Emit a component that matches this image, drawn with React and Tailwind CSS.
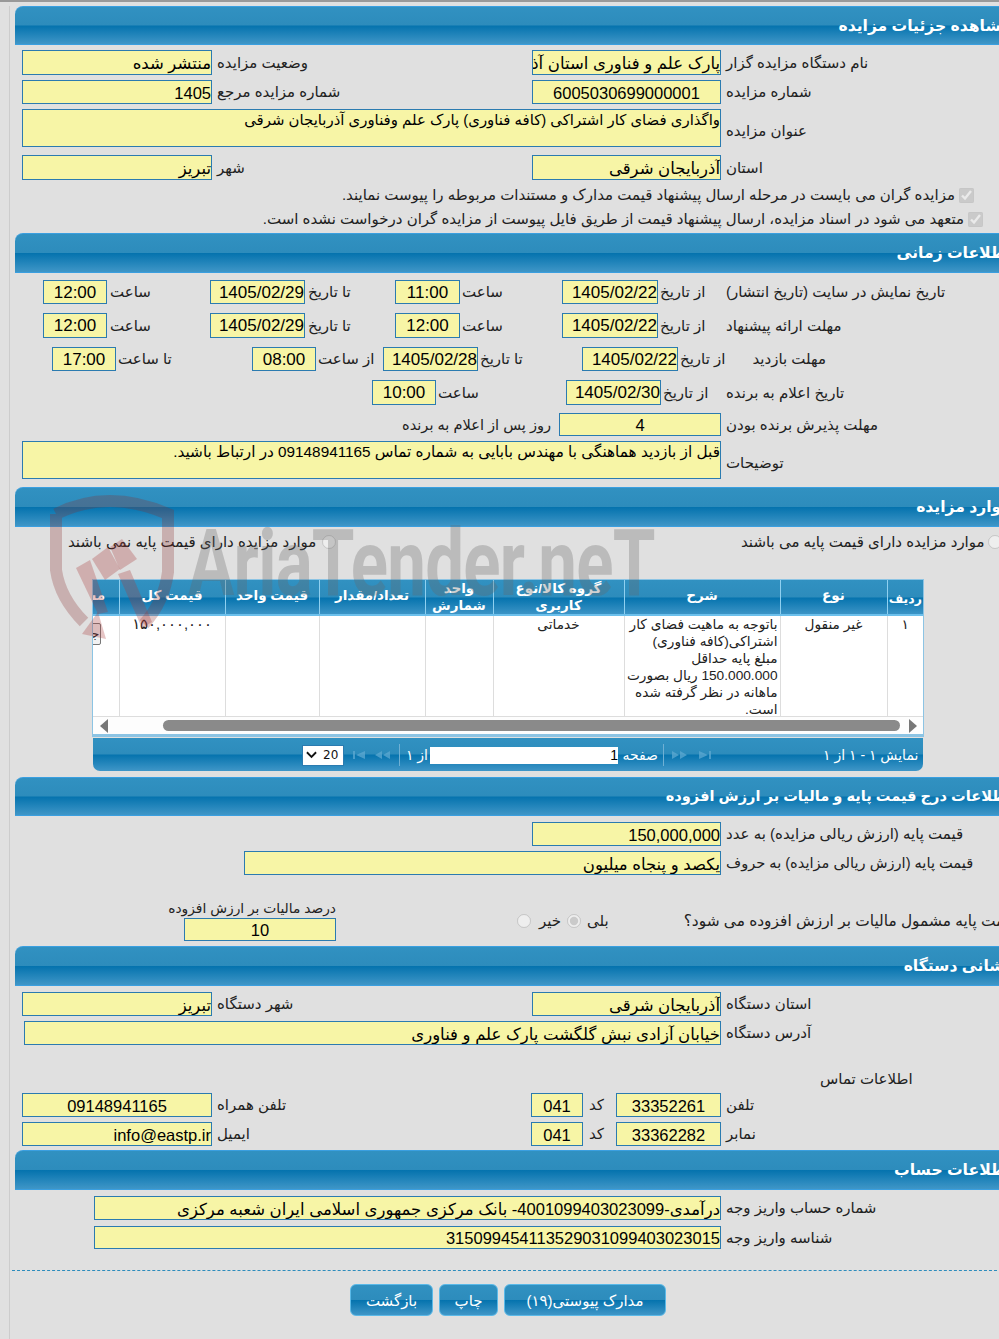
const BAR = "bg-[linear-gradient(to_bottom,#3191c1_0%,#2d8cbc_49%,#0573ae_51%,#3f96c7_100%)]";
const CLOCK = "text-[17px] leading-[24px]";

function Header({ children, className = "", size = "text-[15.6px]" }) {
  return (
    <div
      dir="rtl"
      className={`ml-[5px] w-[1000px] rounded-tl-[8px] border-t border-b border-[#3a9fe0] pr-[4px] flex items-center font-bold text-white whitespace-nowrap ${size} ${BAR} ${className}`}
    >
      <span>{children}</span>
    </div>
  );
}

function Row({ children, className = "" }) {
  return <div className={`ml-[12px] flex items-center ${className}`}>{children}</div>;
}

function Label({ children, className = "", size = "text-[15px]" }) {
  return (
    <div dir="rtl" className={`shrink-0 text-left leading-[18px] text-[#222] whitespace-nowrap ${size} ${className}`}>
      {children}
    </div>
  );
}

function Field({ children, className = "", center = false, size = "text-[16.5px] leading-[24px]" }) {
  return (
    <div
      dir="rtl"
      className={`shrink-0 h-full overflow-hidden whitespace-nowrap border border-[#2b7bb0] bg-[#f7f5a6] text-black ${size} ${center ? "text-center" : "text-right"} ${className}`}
    >
      {children}
    </div>
  );
}

function Radio({ checked = false, className = "" }) {
  return <input type="radio" disabled checked={checked} readOnly className={`shrink-0 w-[14px] h-[14px] ${className}`} />;
}

function Triangle({ left = false, className = "" }) {
  return (
    <svg viewBox="0 0 8 14" className={`shrink-0 w-[8px] h-[14px] ${className}`}>
      <path d={left ? "M8 0 L0 7 L8 14 Z" : "M0 0 L8 7 L0 14 Z"} fill="#777" />
    </svg>
  );
}

function PagerIcon({ kind, className = "" }) {
  const paths = {
    first: "M0 1 H2 V9 H0 Z M12 1 V9 L3 5 Z",
    prev: "M7 1 V9 L0 5 Z M15 1 V9 L8 5 Z",
    next: "M0 1 V9 L7 5 Z M8 1 V9 L15 5 Z",
    last: "M0 1 V9 L9 5 Z M10 1 H12 V9 H10 Z",
  };
  const box = kind === "first" || kind === "last" ? "0 0 12 10" : "0 0 15 10";
  return (
    <svg viewBox={box} className={`shrink-0 h-[10px] ${className}`}>
      <path d={paths[kind]} fill="#5fa9d1" fillOpacity="0.75" />
    </svg>
  );
}

function Watermark() {
  return (
    <div className="absolute left-[40px] top-[488px] w-[620px] h-[170px] pointer-events-none z-10">
      <svg viewBox="0 0 160 160" className="absolute left-0 top-0 w-[160px] h-[160px]">
        <path
          d="M16 24 Q68 -2 128 24 L128 82 Q124 112 104 134 M16 24 L16 80 Q20 108 44 132"
          fill="none"
          stroke="#8a2c2c"
          strokeOpacity="0.27"
          strokeWidth="12"
        />
        <path d="M36 78 L50 70 L68 122 L58 124 Z" fill="#a83a3a" fillOpacity="0.3" />
        <path d="M42 144 L58 122 L66 149 Z" fill="#a83a3a" fillOpacity="0.3" />
        <path d="M52 69 L68 57 L80 79 L65 90 Z" fill="#a83a3a" fillOpacity="0.3" />
        <path d="M70 57 L82 49 L97 69 L80 80 Z" fill="#a83a3a" fillOpacity="0.3" />
        <path d="M78 84 L90 80 L112 132 L102 138 Z" fill="#a83a3a" fillOpacity="0.3" />
      </svg>
      <span className="absolute left-[148px] top-[14px] text-[92px] leading-[120px] font-bold tracking-[-1px] text-[#666]/30 whitespace-nowrap origin-left scale-x-[0.75] [font-family:'Roboto',sans-serif]">
        AriaTender.neT
      </span>
    </div>
  );
}

const cols = [
  ["ردیف", "w-[36px] pt-[4px] text-[12.5px]"],
  ["نوع", "w-[107px] pb-[3px] text-[13.5px]"],
  ["شرح", "w-[156px] pb-[3px] text-[13.5px]"],
  ["گروه کالا/نوع کاربری", "w-[131px] text-[13.5px]"],
  ["واحد شمارش", "w-[68px] text-[13.5px]"],
  ["تعداد/مقدار", "w-[106px] pb-[3px] text-[13.5px]"],
  ["قیمت واحد", "w-[94px] pb-[3px] text-[13.5px]"],
  ["قیمت کل", "w-[106px] pb-[3px] text-[13.5px]"],
  ["مشاهده", "w-[80px] pb-[3px] text-[13.5px]"],
];

function ItemsTable() {
  return (
    <div className="ml-[82px] w-[832px] h-[158px] border border-[#8cc4e4] border-b-[3px] bg-white flex flex-col overflow-hidden">
      <div dir="rtl" className="h-[136px] overflow-hidden">
        <table className="table-fixed w-[884px] border-collapse text-[13.7px] text-[#222]">
          <thead>
            <tr className={`h-[35px] ${BAR}`}>
              {cols.map(([title, w]) => (
                <th key={title} className={`${w} border-l border-[#8fd0f0] border-b-2 border-b-[#6cc0ec] text-center leading-[17px] font-bold text-white`}>
                  {title}
                </th>
              ))}
            </tr>
          </thead>
          <tbody>
            <tr className="h-[103px] align-top leading-[17px]">
              <td className="border-l border-[#ddd] text-center">۱</td>
              <td className="border-l border-[#ddd] text-center">غیر منقول</td>
              <td className="border-l border-[#ddd] pr-[2px] pl-[2px] text-right">
                باتوجه به ماهیت فضای کار اشتراکی(کافه فناوری)
                <br />
                مبلغ پایه حداقل 150.000.000 ریال بصورت ماهانه در نظر گرفته شده است.
              </td>
              <td className="border-l border-[#ddd] text-center">خدماتی</td>
              <td className="border-l border-[#ddd]"></td>
              <td className="border-l border-[#ddd]"></td>
              <td className="border-l border-[#ddd]"></td>
              <td className="border-l border-[#ddd] text-center text-[14.8px]">۱۵۰,۰۰۰,۰۰۰</td>
              <td className="pt-[7px]">
                <div className="mr-[18px] w-[44px] h-[22px] border border-[#777] rounded-[2px] bg-[#f2f2f2] text-right leading-[20px] overflow-hidden">
                  جزئیات
                </div>
              </td>
            </tr>
          </tbody>
        </table>
      </div>
      <div className="flex-1 border-t border-[#ddd] flex items-center bg-[#fdfdfd]">
        <Triangle left className="ml-[7px]" />
        <div className="ml-[55px] w-[737px] h-[11px] rounded-full bg-[#8a8a8a]" />
        <Triangle className="ml-[9px]" />
      </div>
    </div>
  );
}

function Pager() {
  return (
    <div className={`ml-[83px] mt-[1px] w-[830px] h-[33px] pt-[1px] rounded-b-[7px] flex items-center text-white text-[14px] ${BAR}`}>
      <div className="ml-[209px] w-[42px] h-[21px] bg-white flex items-center border border-[#2b7bb0] text-[#111] text-[12px]">
        <svg viewBox="0 0 12 8" className="ml-[3px] w-[11px] h-[8px]">
          <path d="M1 1 L6 6 L11 1" fill="none" stroke="#111" strokeWidth="2" />
        </svg>
        <span className="ml-[6px] [font-family:'DejaVu_Sans',sans-serif]">20</span>
      </div>
      <PagerIcon kind="first" className="ml-[9px] w-[12px]" />
      <PagerIcon kind="prev" className="ml-[10px] w-[15px]" />
      <div className="ml-[9px] w-px h-[22px] bg-[#6fb0d4]" />
      <span dir="rtl" className="ml-[5px] w-[23px] whitespace-nowrap">از ۱</span>
      <div dir="rtl" className="ml-[2px] w-[188px] h-[17px] bg-white text-black text-right leading-[17px]">1</div>
      <span dir="rtl" className="ml-[5px] w-[35px]">صفحه</span>
      <div className="ml-[5px] w-px h-[22px] bg-[#6fb0d4]" />
      <PagerIcon kind="next" className="ml-[8px] w-[15px]" />
      <PagerIcon kind="last" className="ml-[12px] w-[12px]" />
      <span dir="rtl" className="ml-[112px] whitespace-nowrap">نمایش ۱ - ۱ از ۱</span>
    </div>
  );
}

function ActionButton({ children, className = "" }) {
  return (
    <button className={`h-[32px] pt-[2px] rounded-[6px] border border-[#5ab9e8] text-[15px] text-white ${BAR} ${className}`}>
      {children}
    </button>
  );
}

export default function App() {
  return (
    <div className="relative w-[999px] h-[1339px] overflow-hidden bg-[#e0e0e0] border-t-2 border-[#999] [font-family:'Liberation_Sans','DejaVu_Sans',sans-serif]">
      <Watermark />
      <div className="ml-[9px] h-full border-l border-[#ccc]">
        <Header className="mt-[4px] h-[39px]">مشاهده جزئیات مزایده</Header>

        <Row className="mt-[5px] h-[25px]">
          <Field className="w-[190px]">منتشر شده</Field>
          <Label className="ml-[5px] w-[315px]">وضعیت مزایده</Label>
          <Field className="w-[189px]">پارک علم و فناوری استان آذربایجان شرقی</Field>
          <Label className="ml-[5px] w-[200px]">نام دستگاه مزایده گزار</Label>
        </Row>
        <Row className="mt-[5px] h-[24px]">
          <Field className="w-[190px]">1405</Field>
          <Label className="ml-[5px] w-[315px]">شماره مزایده مرجع</Label>
          <Field center className="w-[189px]">6005030699000001</Field>
          <Label className="ml-[5px] w-[200px]">شماره مزایده</Label>
        </Row>
        <Row className="mt-[5px] h-[38px]">
          <Field className="w-[699px] pt-[1px]" size="text-[14.9px] leading-[18px]">واگذاری فضای کار اشتراکی (کافه فناوری) پارک علم وفناوری آذربایجان شرقی</Field>
          <Label className="ml-[5px] w-[200px] mt-[5px]">عنوان مزایده</Label>
        </Row>
        <Row className="mt-[8px] h-[25px]">
          <Field className="w-[190px]">تبریز</Field>
          <Label className="ml-[5px] w-[315px]">شهر</Label>
          <Field className="w-[189px]">آذربایجان شرقی</Field>
          <Label className="ml-[5px] w-[200px]">استان</Label>
        </Row>
        <Row className="mt-[6px] h-[18px] w-[952px] justify-end">
          <Label>مزایده گران می بایست در مرحله ارسال پیشنهاد قیمت مدارک و مستندات مربوطه را پیوست نمایند.</Label>
          <input type="checkbox" disabled checked readOnly className="ml-[4px] w-[15px] h-[15px]" />
        </Row>
        <Row className="mt-[6px] h-[18px] w-[961px] justify-end">
          <Label>متعهد می شود در اسناد مزایده، ارسال پیشنهاد قیمت از طریق فایل پیوست از مزایده گران درخواست نشده است.</Label>
          <input type="checkbox" disabled checked readOnly className="ml-[4px] w-[15px] h-[15px]" />
        </Row>

        <Header className="mt-[5px] h-[40px]">اطلاعات زمانی</Header>

        <Row className="mt-[7px] h-[24px]">
          <Field center className="ml-[21px] w-[64px]" size={CLOCK}>12:00</Field>
          <Label className="ml-[3px] w-[100px]">ساعت</Label>
          <Field className="w-[95px]" size={CLOCK}>1405/02/29</Field>
          <Label className="ml-[3px] w-[87px]">تا تاریخ</Label>
          <Field center className="w-[65px]" size={CLOCK}>11:00</Field>
          <Label className="ml-[2px] w-[100px]">ساعت</Label>
          <Field className="w-[96px]" size={CLOCK}>1405/02/22</Field>
          <Label className="ml-[2px] w-[66px]">از تاریخ</Label>
          <Label className="w-[240px]">تاریخ نمایش در سایت (تاریخ انتشار)</Label>
        </Row>
        <Row className="mt-[9px] h-[25px]">
          <Field center className="ml-[21px] w-[64px]" size={CLOCK}>12:00</Field>
          <Label className="ml-[3px] w-[100px]">ساعت</Label>
          <Field className="w-[95px]" size={CLOCK}>1405/02/29</Field>
          <Label className="ml-[3px] w-[87px]">تا تاریخ</Label>
          <Field center className="w-[65px]" size={CLOCK}>12:00</Field>
          <Label className="ml-[2px] w-[100px]">ساعت</Label>
          <Field className="w-[96px]" size={CLOCK}>1405/02/22</Field>
          <Label className="ml-[2px] w-[66px]">از تاریخ</Label>
          <Label className="w-[240px]">مهلت ارائه پیشنهاد</Label>
        </Row>
        <Row className="mt-[9px] h-[24px]">
          <Field center className="ml-[30px] w-[64px]" size={CLOCK}>17:00</Field>
          <Label className="ml-[2px] w-[134px]">تا ساعت</Label>
          <Field center className="w-[64px]" size={CLOCK}>08:00</Field>
          <Label className="ml-[2px] w-[65px]">از ساعت</Label>
          <Field className="w-[95px]" size={CLOCK}>1405/02/28</Field>
          <Label className="ml-[2px] w-[102px]">تا تاریخ</Label>
          <Field className="w-[96px]" size={CLOCK}>1405/02/22</Field>
          <Label className="ml-[2px] w-[46px]">از تاریخ</Label>
          <Label className="w-[100px] pl-[31px]">مهلت بازدید</Label>
        </Row>
        <Row className="mt-[9px] h-[25px]">
          <Field center className="ml-[350px] w-[64px]" size={CLOCK}>10:00</Field>
          <Label className="ml-[2px] w-[128px]">ساعت</Label>
          <Field className="w-[95px]" size={CLOCK}>1405/02/30</Field>
          <Label className="ml-[2px] w-[63px]">از تاریخ</Label>
          <Label className="w-[200px]">تاریخ اعلام به برنده</Label>
        </Row>
        <Row className="mt-[8px] h-[23px]">
          <Label className="ml-[380px] w-[157px]" size="text-[14.6px]">روز پس از اعلام به برنده</Label>
          <Field center className="w-[162px]" size="text-[16.5px] leading-[22px]">4</Field>
          <Label className="ml-[5px] w-[200px]">مهلت پذیرش برنده بودن</Label>
        </Row>
        <Row className="mt-[5px] h-[38px]">
          <Field className="w-[699px] pt-[1px]" size="text-[15.3px] leading-[18px]">قبل از بازدید هماهنگی با مهندس بابایی به شماره تماس 09148941165 در ارتباط باشید.</Field>
          <Label className="ml-[5px] w-[200px] mt-[5px]">توضیحات</Label>
        </Row>

        <Header className="mt-[8px] h-[40px]">موارد مزایده</Header>

        <Row className="mt-[5px] h-[20px]">
          <Label className="ml-[46px] w-[250px]">موارد مزایده دارای قیمت پایه نمی باشند</Label>
          <Radio className="ml-[4px]" />
          <Label className="ml-[405px] w-[245px]">موارد مزایده دارای قیمت پایه می باشند</Label>
          <Radio className="ml-[2px]" />
        </Row>

        <div className="mt-[27px]">
          <ItemsTable />
          <Pager />
        </div>

        <Header className="mt-[6px] h-[39px]" size="text-[14.6px]">اطلاعات درج قیمت پایه و مالیات بر ارزش افزوده</Header>

        <Row className="mt-[6px] h-[24px]">
          <Field className="ml-[510px] w-[189px]">150,000,000</Field>
          <Label className="ml-[5px] w-[260px]">قیمت پایه (ارزش ریالی مزایده) به عدد</Label>
        </Row>
        <Row className="mt-[5px] h-[24px]">
          <Field className="ml-[222px] w-[477px]">یکصد و پنجاه میلیون</Field>
          <Label className="ml-[5px] w-[260px]" size="text-[14.6px]">قیمت پایه (ارزش ریالی مزایده) به حروف</Label>
        </Row>
        <Row className="mt-[25px] h-[42px] items-end">
          <div className="ml-[146px] w-[168px] h-full flex flex-col shrink-0">
            <Label className="text-right" size="text-[13.8px]">درصد مالیات بر ارزش افزوده</Label>
            <Field center className="ml-[16px] w-[152px] !h-[23px]" size="text-[16.5px] leading-[22px]">10</Field>
          </div>
          <Radio className="ml-[181px] mb-[14px]" />
          <Label className="ml-[8px] w-[26px] mb-[12px]">خیر</Label>
          <Radio checked className="ml-[2px] mb-[14px]" />
          <Label className="ml-[6px] w-[100px] mb-[12px]">بلی</Label>
          <Label className="w-[330px] mb-[12px]" size="text-[15.4px]">قیمت پایه مشمول مالیات بر ارزش افزوده می شود؟</Label>
        </Row>

        <Header className="mt-[4px] h-[40px]">نشانی دستگاه</Header>

        <Row className="mt-[6px] h-[24px]">
          <Field className="w-[190px]">تبریز</Field>
          <Label className="ml-[5px] w-[315px]">شهر دستگاه</Label>
          <Field className="w-[189px]">آذربایجان شرقی</Field>
          <Label className="ml-[5px] w-[200px]">استان دستگاه</Label>
        </Row>
        <Row className="mt-[5px] h-[24px]">
          <Field className="ml-[2px] w-[697px]">خیابان آزادی نبش گلگشت پارک علم و فناوری</Field>
          <Label className="ml-[5px] w-[200px]">آدرس دستگاه</Label>
        </Row>
        <Row className="mt-[25px] h-[18px]">
          <Label className="ml-[798px] w-[100px]">اطلاعات تماس</Label>
        </Row>
        <Row className="mt-[5px] h-[24px]">
          <Field center className="w-[190px]">09148941165</Field>
          <Label className="ml-[5px] w-[314px]">تلفن همراه</Label>
          <Field center className="w-[52px]">041</Field>
          <Label className="ml-[6px] w-[27px]">کد</Label>
          <Field center className="w-[105px]">33352261</Field>
          <Label className="ml-[5px] w-[100px]">تلفن</Label>
        </Row>
        <Row className="mt-[5px] h-[24px]">
          <Field className="w-[190px]">info@eastp.ir</Field>
          <Label className="ml-[5px] w-[314px]">ایمیل</Label>
          <Field center className="w-[52px]">041</Field>
          <Label className="ml-[6px] w-[27px]">کد</Label>
          <Field center className="w-[105px]">33362282</Field>
          <Label className="ml-[5px] w-[100px]">نمابر</Label>
        </Row>

        <Header className="mt-[4px] h-[40px]">اطلاعات حساب</Header>

        <Row className="mt-[6px] h-[24px]">
          <Field className="ml-[72px] w-[627px]">درآمدی-4001099403023099- بانک مرکزی جمهوری اسلامی ایران شعبه مرکزی</Field>
          <Label className="ml-[5px] w-[200px]">شماره حساب واریز وجه</Label>
        </Row>
        <Row className="mt-[6px] h-[23px]">
          <Field className="ml-[72px] w-[627px]" size="text-[16.5px] leading-[22px]">315099454113529031099403023015</Field>
          <Label className="ml-[5px] w-[200px]">شناسه واریز وجه</Label>
        </Row>

        <div className="ml-[2px] mt-[21px] w-[990px] border-t border-dashed border-[#2d8cbc]" />

        <div className="mt-[13px] ml-[340px] flex gap-[6px]" dir="ltr">
          <ActionButton className="w-[83px]">بازگشت</ActionButton>
          <ActionButton className="w-[59px]">چاپ</ActionButton>
          <ActionButton className="w-[162px]">مدارک پیوستی(۱۹)</ActionButton>
        </div>
      </div>
    </div>
  );
}
